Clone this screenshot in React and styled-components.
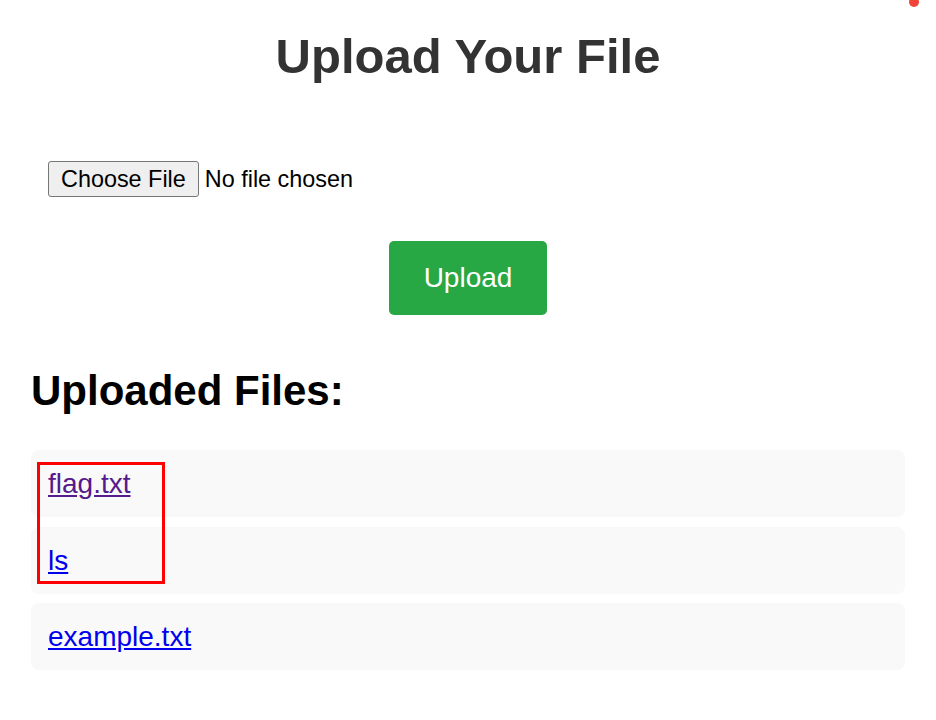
import React from 'react';
import styled, { createGlobalStyle } from 'styled-components';

const GlobalStyle = createGlobalStyle`
    body {
        margin: 0;
        background: #fff;
        font-family: "Liberation Sans", Arial, sans-serif;
    }
`;

const files = [
    { name: 'flag.txt', visited: true },
    { name: 'ls', visited: false },
    { name: 'example.txt', visited: false },
];

const Page = styled.div`
    position: relative;
    padding: 28px 31px 40px;
`;

const Title = styled.h1`
    margin: 0;
    font-size: 49px;
    line-height: 56px;
    font-weight: bold;
    color: #333;
    text-align: center;
`;

const Form = styled.form`
    display: flex;
    flex-direction: column;
`;

const FileRow = styled.div`
    margin-top: 77px;
    padding-left: 17px;
`;

const FileInput = styled.input`
    display: block;
    height: 36px;
    font-family: "Liberation Sans", Arial, sans-serif;
    font-size: 23.4px;
    color: #000;

    &::file-selector-button {
        height: 36px;
        margin: 0 6px 0 0;
        padding: 0 12px;
        font: inherit;
        color: #000;
        background: #efefef;
        border: 1px solid #767676;
        border-radius: 3px;
    }
`;

const UploadButton = styled.button`
    align-self: center;
    margin-top: 44px;
    height: 74px;
    padding: 0 35px;
    border: none;
    border-radius: 5px;
    background-color: #28a745;
    color: #fff;
    font-family: "Liberation Sans", Arial, sans-serif;
    font-size: 28px;
    line-height: 32px;
    cursor: pointer;
`;

const Heading = styled.h2`
    margin: 52px 0 0;
    font-size: 42px;
    line-height: 48px;
    font-weight: bold;
    color: #000;
`;

const FileList = styled.ul`
    list-style: none;
    margin: 35px 0 0;
    padding: 0;
    display: flex;
    flex-direction: column;
    gap: 9.5px;
`;

const FileItem = styled.li`
    padding: 17px;
    background: #f9f9f9;
    border-radius: 8px;
    font-size: 28px;
    line-height: 33px;
`;

const FileLink = styled.a`
    color: ${(p) => (p.$visited ? '#551a8b' : '#0000ee')};
    text-decoration: underline;
`;

// red annotation box drawn over the first two entries
const Highlight = styled.div`
    position: absolute;
    left: 37px;
    top: 462px;
    width: 128px;
    height: 122px;
    box-sizing: border-box;
    border: 3px solid #ff0000;
    pointer-events: none;
`;

const Dot = styled.div`
    position: absolute;
    left: 909px;
    top: -3px;
    width: 10px;
    height: 10px;
    border-radius: 50%;
    background: #f04438;
`;

export default function App() {
    return (
        <>
            <GlobalStyle />
            <Page>
                <Title>Upload Your File</Title>
                <Form onSubmit={(e) => e.preventDefault()}>
                    <FileRow>
                        <FileInput type="file" />
                    </FileRow>
                    <UploadButton type="submit">Upload</UploadButton>
                </Form>
                <Heading>Uploaded Files:</Heading>
                <FileList>
                    {files.map((f) => (
                        <FileItem key={f.name}>
                            <FileLink href="#" $visited={f.visited}>{f.name}</FileLink>
                        </FileItem>
                    ))}
                </FileList>
                <Highlight />
                <Dot />
            </Page>
        </>
    );
}
